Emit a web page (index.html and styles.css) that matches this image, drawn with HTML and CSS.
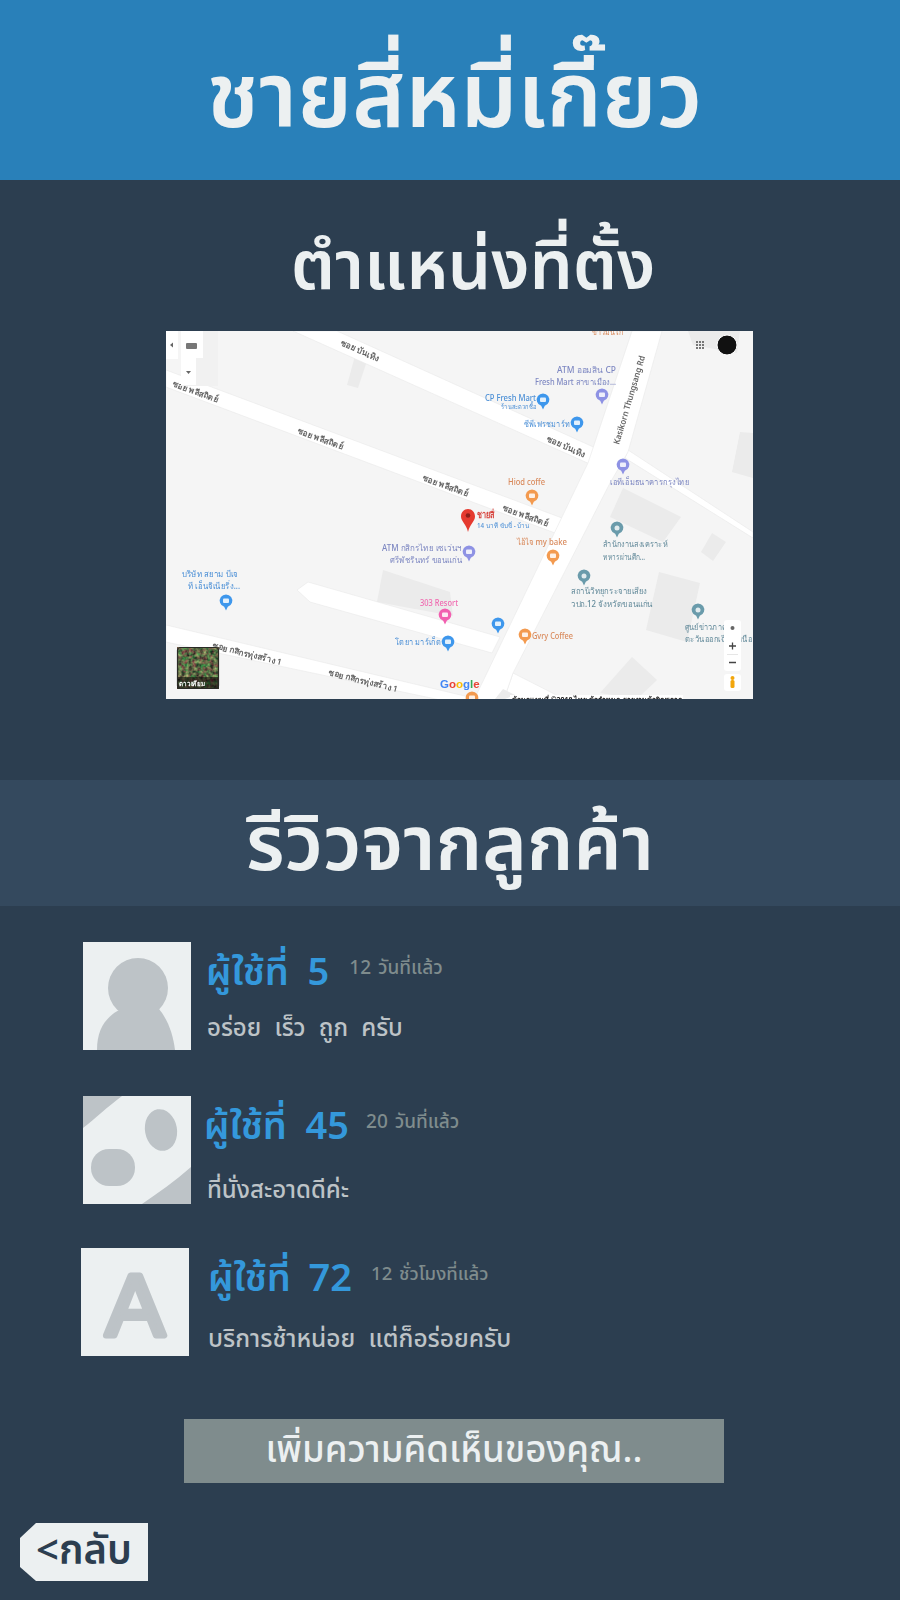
FILE: index.html
```html
<!DOCTYPE html>
<html lang="th">
<head>
<meta charset="utf-8">
<title>ชายสี่หมี่เกี๊ยว</title>
<link rel="stylesheet" href="styles.css">
</head>
<body>
<header class="hero"><h1>ชายสี่หมี่เกี๊ยว</h1></header>
<section class="location">
  <h2>ตำแหน่งที่ตั้ง</h2>
  <svg class="map" viewBox="166 331 587 368" xmlns="http://www.w3.org/2000/svg" role="img" aria-label="แผนที่">
    <defs>
      <g id="pin">
        <path d="M-1.800 5.800A6.300 6.300 0 1 1 1.800 5.800L0 9.500Z"/>
        <rect x="-3" y="-2.500" width="6" height="4.500" rx="1" fill="#fff" opacity=".85"/>
      </g>
      <g id="pin-round">
        <path d="M-1.800 5.800A6.300 6.300 0 1 1 1.800 5.800L0 9.500Z"/>
        <circle r="2.500" fill="#fff" opacity=".8"/>
      </g>
      <filter id="aerial" x="0" y="0" width="100%" height="100%" color-interpolation-filters="sRGB">
        <feTurbulence type="fractalNoise" baseFrequency=".28" numOctaves="2" seed="7"/>
        <feColorMatrix values=".8 .2 0 0 -.13  .2 .8 0 0 -.09  .3 .3 0 0 -.03  0 0 0 0 1"/>
      </filter>
    </defs>
    <rect x="166" y="331" width="587" height="368" fill="#f5f5f5"/>
    <g fill="#ebebeb">
      <polygon points="355,356 368,358 358,388 347,385"/>
      <polygon points="383,570 450,592 453,616 377,602"/>
      <polygon points="623,488 681,517 663,542 610,517"/>
      <polygon points="712,533 726,542 713,561 701,552"/>
      <polygon points="659,572 700,583 687,642 646,630"/>
      <polygon points="740,432 753,433 753,478 732,472"/>
      <polygon points="632,657 657,680 637,699 600,693"/>
      <polygon points="688,331 740,331 737,353 693,345"/>
    </g>
    <g fill="#fff" stroke="#e9e9e9" stroke-width=".6">
      <polygon points="293,331 337,331 600,450 592,465"/>
      <polygon points="166,370 562,518 555,533 166,387"/>
      <polygon points="166,625 490,702 450,702 166,642"/>
      <polygon points="308,582 500,637 492,653 310,602 297,590"/>
      <polygon points="628,450 753,532 753,538 625,458"/>
      <polygon points="513,673 570,702 503,702"/>
      <polygon points="632,331 662,331 628,452 610,483 513,673 503,702 473,702 588,463"/>
    </g>
    <polygon points="503,689 515,695 505,699 495,699" fill="#ebebeb"/>
    <rect x="510" y="695" width="173" height="4" fill="#fff"/>
    <g class="road-label">
      <text transform="translate(340,345) rotate(24)" textLength="41" lengthAdjust="spacingAndGlyphs">ซอย บันเทิง</text>
      <text transform="translate(546,441) rotate(24)" textLength="41" lengthAdjust="spacingAndGlyphs">ซอย บันเทิง</text>
      <text transform="translate(172,386) rotate(20)" textLength="48" lengthAdjust="spacingAndGlyphs">ซอย พลีสถิตย์</text>
      <text transform="translate(297,433) rotate(20)" textLength="48" lengthAdjust="spacingAndGlyphs">ซอย พลีสถิตย์</text>
      <text transform="translate(422,480) rotate(20)" textLength="48" lengthAdjust="spacingAndGlyphs">ซอย พลีสถิตย์</text>
      <text transform="translate(502,510) rotate(20)" textLength="48" lengthAdjust="spacingAndGlyphs">ซอย พลีสถิตย์</text>
      <text transform="translate(212,648) rotate(14)" textLength="71" lengthAdjust="spacingAndGlyphs">ซอย กสิกรทุ่งสร้าง 1</text>
      <text transform="translate(328,675) rotate(14)" textLength="71" lengthAdjust="spacingAndGlyphs">ซอย กสิกรทุ่งสร้าง 1</text>
      <text transform="translate(619,445) rotate(-73.500)" textLength="92" lengthAdjust="spacingAndGlyphs">Kasikorn Thungsang Rd</text>
    </g>
    <g class="poi blue">
      <text x="182" y="577" textLength="56" lengthAdjust="spacingAndGlyphs">บริษัท สยาม บีเจ</text>
      <text x="188" y="589" textLength="52" lengthAdjust="spacingAndGlyphs">ที เอ็นจิเนียริ่ง...</text>
      <text x="485" y="401" textLength="51" lengthAdjust="spacingAndGlyphs">CP Fresh Mart</text>
      <text x="501" y="409" textLength="35" lengthAdjust="spacingAndGlyphs" class="tiny">ร้านสะดวกซื้อ</text>
      <text x="524" y="427" textLength="46" lengthAdjust="spacingAndGlyphs">ซีพีเฟรชมาร์ท</text>
      <text x="395" y="645" textLength="46" lengthAdjust="spacingAndGlyphs">โตยา มาร์เก็ต</text>
      <text x="477" y="528" textLength="52" lengthAdjust="spacingAndGlyphs" class="tiny">14 นาที ขับขี่ - บ้าน</text>
    </g>
    <g class="poi indigo">
      <text x="557" y="373" textLength="59" lengthAdjust="spacingAndGlyphs">ATM ออมสิน CP</text>
      <text x="535" y="385" textLength="81" lengthAdjust="spacingAndGlyphs">Fresh Mart สาขาเมือง...</text>
      <text x="382" y="551" textLength="80" lengthAdjust="spacingAndGlyphs">ATM กสิกรไทย เซเว่นฯ</text>
      <text x="390" y="563" textLength="72" lengthAdjust="spacingAndGlyphs">ศรีพัชรินทร์ ขอนแก่น</text>
      <text x="610" y="485" textLength="79" lengthAdjust="spacingAndGlyphs">เอทีเอ็มธนาคารกรุงไทย</text>
    </g>
    <g class="poi orange">
      <text x="508" y="485" textLength="37" lengthAdjust="spacingAndGlyphs">Hiod coffe</text>
      <text x="517" y="545" textLength="50" lengthAdjust="spacingAndGlyphs">ไอ้ไจ my bake</text>
      <text x="532" y="639" textLength="41" lengthAdjust="spacingAndGlyphs">Gvry Coffee</text>
      <text x="592" y="335" textLength="31" lengthAdjust="spacingAndGlyphs">ข้าวมันไก่</text>
    </g>
    <g class="poi teal">
      <text x="603" y="547" textLength="65" lengthAdjust="spacingAndGlyphs">สำนักงานสงเคราะห์</text>
      <text x="603" y="560" textLength="42" lengthAdjust="spacingAndGlyphs">ทหารผ่านศึก...</text>
      <text x="571" y="594" textLength="76" lengthAdjust="spacingAndGlyphs">สถานีวิทยุกระจายเสียง</text>
      <text x="571" y="607" textLength="82" lengthAdjust="spacingAndGlyphs">วปถ.12 จังหวัดขอนแก่น</text>
      <text x="685" y="630" textLength="42" lengthAdjust="spacingAndGlyphs">ศูนย์ข่าวภาค</text>
      <text x="685" y="642" textLength="67" lengthAdjust="spacingAndGlyphs">ตะวันออกเฉียงเหนือ</text>
    </g>
    <text class="poi pink" x="420" y="606" textLength="38" lengthAdjust="spacingAndGlyphs">303 Resort</text>
    <text class="place" x="477" y="518" textLength="17" lengthAdjust="spacingAndGlyphs">ชายสี่</text>

    <use href="#pin" class="pin-blue" x="226" y="601"/>
    <use href="#pin" class="pin-blue" x="543" y="400"/>
    <use href="#pin" class="pin-blue" x="577" y="423"/>
    <use href="#pin" class="pin-blue" x="448" y="642"/>
    <use href="#pin" class="pin-blue" x="498" y="624"/>
    <use href="#pin" class="pin-indigo" x="602" y="395"/>
    <use href="#pin" class="pin-indigo" x="623" y="465"/>
    <use href="#pin" class="pin-indigo" x="469" y="552"/>
    <use href="#pin" class="pin-orange" x="532" y="496"/>
    <use href="#pin" class="pin-orange" x="553" y="556"/>
    <use href="#pin" class="pin-orange" x="525" y="635"/>
    <use href="#pin" class="pin-orange" x="472" y="698"/>
    <use href="#pin-round" class="pin-teal" x="617" y="528"/>
    <use href="#pin-round" class="pin-teal" x="584" y="576"/>
    <use href="#pin-round" class="pin-teal" x="698" y="610"/>
    <use href="#pin" class="pin-pink" x="445" y="615"/>
    <path d="M468 509c-4 0-7 3.300-7 7.500 0 5 5 7 7 15.500 2-8.500 7-10.500 7-15.500 0-4.200-3-7.500-7-7.500z" fill="#e53a2f"/>
    <circle cx="468" cy="515.500" r="2.300" fill="#8e1f1a"/>

    <rect x="166" y="331" width="12" height="28" fill="#fff"/>
    <path d="M170 345l3-2.500v5z" fill="#666"/>
    <rect x="181" y="331" width="37" height="55" fill="#f1f1f1"/>
    <rect x="181" y="331" width="22" height="27" fill="#fff"/>
    <rect x="181" y="358" width="15" height="27" fill="#fff"/>
    <rect x="186" y="343" width="11" height="6" rx="1" fill="#777"/>
    <path d="M186 371h5l-2.500 3z" fill="#666"/>
    <g fill="#777">
      <rect x="696" y="341" width="2" height="2"/><rect x="699" y="341" width="2" height="2"/><rect x="702" y="341" width="2" height="2"/>
      <rect x="696" y="344" width="2" height="2"/><rect x="699" y="344" width="2" height="2"/><rect x="702" y="344" width="2" height="2"/>
      <rect x="696" y="347" width="2" height="2"/><rect x="699" y="347" width="2" height="2"/><rect x="702" y="347" width="2" height="2"/>
    </g>
    <circle cx="727" cy="345" r="10" fill="#111" stroke="#fff"/>

    <rect x="177" y="647" width="42" height="42" rx="3" filter="url(#aerial)"/>
    <rect x="177" y="677" width="42" height="12" fill="#000" opacity=".5"/>
    <rect x="177.500" y="647.500" width="41" height="41" rx="3" fill="none" stroke="#2a2a26" stroke-width="1.200"/>
    <text class="sat" x="179" y="686" textLength="26" lengthAdjust="spacingAndGlyphs">ดาวเทียม</text>

    <rect x="724" y="620" width="17" height="51" rx="3" fill="#fff"/>
    <rect x="724" y="674" width="17" height="17" rx="3" fill="#fff"/>
    <circle cx="732.500" cy="628" r="2" fill="#666"/>
    <path d="M729 646h7M732.500 642.500v7M729 662.500h7" stroke="#444" stroke-width="1.300"/>
    <path d="M727 654.500h11" stroke="#e6e6e6"/>
    <circle cx="732.500" cy="678" r="2" fill="#f2a60c"/>
    <rect x="730.500" y="680" width="4" height="8" rx="1.500" fill="#f2a60c"/>

    <text class="gg" x="440" y="688"><tspan fill="#4285f4">G</tspan><tspan fill="#ea4335">o</tspan><tspan fill="#fbbc05">o</tspan><tspan fill="#4285f4">g</tspan><tspan fill="#34a853">l</tspan><tspan fill="#ea4335">e</tspan></text>
    <text class="terms" x="512" y="702" textLength="171" lengthAdjust="spacingAndGlyphs">ข้อมูลแผนที่ ©2018 ไทย ข้อกำหนด รายงานข้อผิดพลาด</text>
  </svg>
</section>
<section class="reviews">
  <h2 class="band">รีวิวจากลูกค้า</h2>
  <article class="review first">
    <svg class="avatar" viewBox="0 0 108 108" xmlns="http://www.w3.org/2000/svg" aria-hidden="true">
      <rect width="108" height="108" fill="#ecf0f1"/>
      <circle cx="55" cy="46" r="30" fill="#bdc3c7"/>
      <path d="M14 108C14 88 22 75 38 67H76C85 78 90 92 92 108Z" fill="#bdc3c7"/>
    </svg>
    <div class="body">
      <div class="line"><span class="user">ผู้ใช้ที่ <b>5</b></span><span class="when">12 วันที่แล้ว</span></div>
      <p class="text">อร่อย เร็ว ถูก ครับ</p>
    </div>
  </article>
  <article class="review second">
    <svg class="avatar" viewBox="0 0 108 108" xmlns="http://www.w3.org/2000/svg" aria-hidden="true">
      <rect width="108" height="108" fill="#ecf0f1"/>
      <path d="M0 0H39C24 11 12 23 0 32ZM108 71V108H59C75 97 92 85 108 71Z" fill="#bdc3c7"/>
      <ellipse cx="78" cy="34" rx="16" ry="21" transform="rotate(-10 78 34)" fill="#bdc3c7"/>
      <rect x="8" y="53" width="44" height="37" rx="18" fill="#bdc3c7"/>
    </svg>
    <div class="body">
      <div class="line"><span class="user">ผู้ใช้ที่ <b>45</b></span><span class="when">20 วันที่แล้ว</span></div>
      <p class="text">ที่นั่งสะอาดดีค่ะ</p>
    </div>
  </article>
  <article class="review third">
    <svg class="avatar" viewBox="0 0 108 108" xmlns="http://www.w3.org/2000/svg" aria-hidden="true">
      <rect width="108" height="108" fill="#ecf0f1"/>
      <text class="avatar-letter" x="54" y="88" text-anchor="middle">A</text>
    </svg>
    <div class="body">
      <div class="line"><span class="user">ผู้ใช้ที่ <b>72</b></span><span class="when">12 ชั่วโมงที่แล้ว</span></div>
      <p class="text">บริการช้าหน่อย แต่ก็อร่อยครับ</p>
    </div>
  </article>
  <div class="actions"><a class="add" href="#">เพิ่มความคิดเห็นของคุณ..</a></div>
  <a class="back" href="#">&lt;กลับ</a>
</section>
</body>
</html>
```
FILE: styles.css
```css
* { box-sizing: border-box; }
html, body { margin: 0; padding: 0; }
body {
  width: 900px;
  height: 1600px;
  overflow: hidden;
  background: #2c3e50;
  color: #ecf0f1;
  font-family: "Noto Sans Thai", "Noto Sans", "DejaVu Sans", "Liberation Sans", sans-serif;
}
h1, h2, p { margin: 0; font-weight: 600; }
.hero {
  height: 180px;
  padding: 20px 0 0 9px;
  background: #2980b9;
  display: flex;
  align-items: center;
  justify-content: center;
}
.hero h1 { font-size: 90px; line-height: 1; font-weight: 600; }
.location { height: 600px; }
.location h2 {
  height: 151px;
  padding: 38px 0 0 46px;
  text-align: center;
  font-size: 68.500px;
  line-height: 100px;
}
.map { display: block; width: 587px; height: 368px; margin-left: 166px; filter: blur(.45px); }
.road-label text { font: 600 8.500px "Noto Sans", "DejaVu Sans", sans-serif; fill: #666; }
.poi { font: 500 8.500px "Noto Sans", "DejaVu Sans", sans-serif; }
.poi .tiny { font-size: 7px; }
.blue { fill: #4b8fd6; }
.indigo { fill: #7e88c2; }
.orange { fill: #d98a5c; }
.teal { fill: #648b9b; }
.pink { fill: #f06ab0; }
.place { font: 700 9px "Noto Sans", sans-serif; fill: #d6403a; }
.pin-blue { fill: #3e97ec; }
.pin-indigo { fill: #8e92e4; }
.pin-orange { fill: #f39a4f; }
.pin-teal { fill: #6a9bab; }
.pin-pink { fill: #f25fb0; }
.sat { font: 700 7px "Noto Sans", sans-serif; fill: #fff; }
.gg { font: 700 11.500px "Liberation Sans", sans-serif; }
.terms { font: 700 7px "Noto Sans", sans-serif; fill: #222; }
.band {
  height: 126px;
  padding-top: 8px;
  background: #34495e;
  text-align: center;
  font-size: 76px;
  line-height: 118px;
}
.review { display: flex; align-items: flex-start; height: 108px; }
.review.first { margin: 36px 0 0 83px; gap: 16px; }
.review.second { margin: 46px 0 0 83px; gap: 14px; }
.review.third { margin: 44px 0 0 81px; gap: 19px; }
.avatar { display: block; width: 108px; height: 108px; flex: none; }
.avatar-letter {
  font: 400 88px "Liberation Sans", sans-serif;
  fill: #bdc3c7;
  stroke: #bdc3c7;
  stroke-width: 6;
  stroke-linejoin: round;
}
.line { display: flex; align-items: flex-start; gap: 20px; }
.first .line { height: 67px; margin-left: -1px; }
.second .line { height: 75px; margin-left: -1px; gap: 17px; }
.third .line { height: 72px; gap: 19px; }
.user { font-size: 38px; line-height: 64px; color: #3498db; font-weight: 600; }
.user b { font-weight: 600; margin-left: 9px; }
.third .user b { margin-left: 8px; }
.when { font-size: 19px; word-spacing: 2px; line-height: 53px; color: #7f8c8d; font-weight: 500; }
.third .when { font-size: 18.500px; }
.text { font-size: 24px; line-height: 40px; color: #bdc3c7; font-weight: 500; word-spacing: 7px; }
.second .text { margin-left: 2px; }
.third .text { font-size: 24.500px; }
.actions { margin: 63px 0 0 184px; }
.add {
  display: block;
  width: 540px;
  height: 64px;
  background: #7f8c8d;
  color: #ecf0f1;
  text-align: center;
  text-decoration: none;
  font-size: 36.500px;
  font-weight: 500;
  line-height: 64px;
}
.back {
  display: block;
  width: 128px;
  height: 58px;
  margin: 40px 0 0 20px;
  background: #ecf0f1;
  color: #2c3e50;
  text-align: center;
  text-decoration: none;
  font-size: 40px;
  font-weight: 600;
  line-height: 58px;
  clip-path: polygon(16px 0, 100% 0, 100% 100%, 16px 100%, 0 44px, 0 15px);
}
```
